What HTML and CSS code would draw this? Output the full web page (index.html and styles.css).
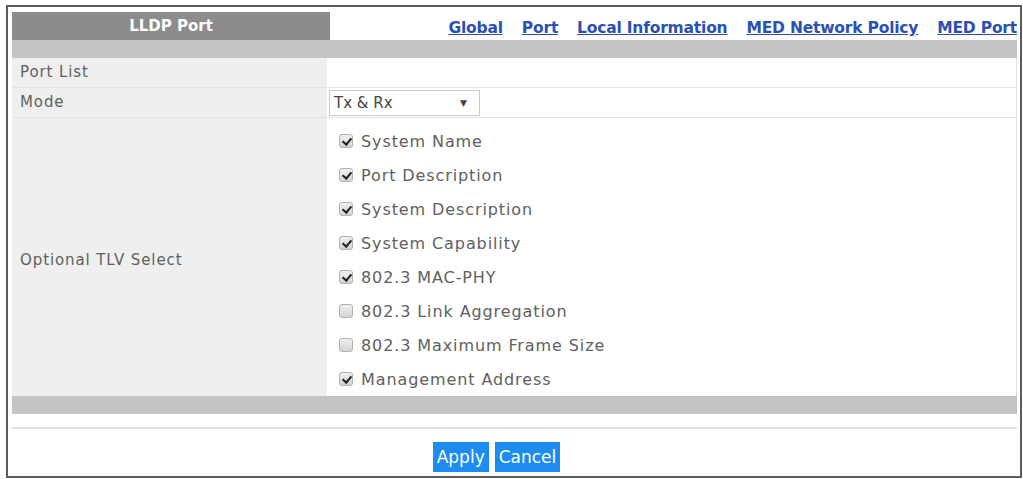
FILE: index.html
```html
<!DOCTYPE html>
<html lang="en">
<head>
  <meta charset="UTF-8">
  <title>LLDP Port</title>
  <link rel="stylesheet" href="styles.css">
</head>
<body>
  <!-- Figure frame -->
  <div class="frame">
    <div class="top-bar">
      <div class="tab">LLDP Port</div>
      <nav class="links">
        <a href="#">Global</a>
        <a href="#">Port</a>
        <a href="#">Local Information</a>
        <a href="#">MED Network Policy</a>
        <a href="#">MED Port</a>
      </nav>
    </div>
    <div class="bar"></div>

    <div class="form">
      <div class="label">Port List</div>
      <div class="value"></div>

      <div class="label">Mode</div>
      <div class="value">
        <div class="select"><span>Tx &amp; Rx</span><span class="arrow">▼</span></div>
      </div>

      <div class="label label-tall">Optional TLV Select</div>
      <div class="value checks">
        <label class="check on"><span class="box"></span>System Name</label>
        <label class="check on"><span class="box"></span>Port Description</label>
        <label class="check on"><span class="box"></span>System Description</label>
        <label class="check on"><span class="box"></span>System Capability</label>
        <label class="check on"><span class="box"></span>802.3 MAC-PHY</label>
        <label class="check"><span class="box"></span>802.3 Link Aggregation</label>
        <label class="check"><span class="box"></span>802.3 Maximum Frame Size</label>
        <label class="check on"><span class="box"></span>Management Address</label>
      </div>
    </div>

    <div class="bar"></div>
    <div class="rule"></div>

    <div class="actions">
      <button>Apply</button>
      <button>Cancel</button>
    </div>
  </div>
</body>
</html>
```

FILE: styles.css
```css
* {
  margin: 0;
  padding: 0;
  box-sizing: border-box;
}

body {
  background: #fff;
  font-family: 'DejaVu Sans', sans-serif;
  color: #606060;
}

/* Frame */
.frame {
  margin: 5px 0 0 6px;
  width: 1016px;
  height: 473px;
  border: 2px solid #5c5c5c;
  padding: 5px 3px 0 4px;
}

.top-bar {
  display: flex;
  align-items: flex-end;
  justify-content: space-between;
  height: 28px;
}

.tab {
  width: 318px;
  height: 28px;
  background: #8c8c8c;
  color: #fff;
  font-weight: bold;
  font-size: 15px;
  line-height: 28px;
  text-align: center;
}

.links {
  display: flex;
  gap: 19px;
  padding-bottom: 3px;
}

.links a {
  color: #2b50b3;
  font-weight: bold;
  font-size: 15.5px;
  letter-spacing: -0.2px;
}

.bar {
  height: 18px;
  background: #c4c4c4;
}

/* Form rows */
.form {
  display: grid;
  grid-template-columns: 315px 1fr;
}

.label {
  background: #efefef;
  font-size: 15px;
  letter-spacing: 0.9px;
  padding-left: 8px;
  height: 30px;
  line-height: 29px;
  border-bottom: 1px solid #e2e2e2;
}

.value {
  height: 30px;
  border-bottom: 1px solid #e2e2e2;
  border-right: 1px solid #e2e2e2;
  padding-left: 2px;
  display: flex;
  align-items: center;
}

.label-tall {
  height: auto;
  display: flex;
  align-items: center;
  padding-top: 6px;
  border-bottom: none;
}

.select {
  width: 151px;
  height: 26px;
  border: 1px solid #c9c9c9;
  display: flex;
  justify-content: space-between;
  align-items: center;
  padding: 0 12px 0 4px;
  font-size: 15px;
  color: #444;
}

.arrow {
  font-size: 9px;
}

.checks {
  height: auto;
  flex-direction: column;
  align-items: flex-start;
  padding: 6px 0 0 12px;
  border-bottom: none;
}

.check {
  display: flex;
  align-items: center;
  height: 34px;
  font-size: 16px;
  letter-spacing: 0.9px;
  color: #606060;
}

.box {
  width: 14px;
  height: 14px;
  border: 1px solid #b0b0b0;
  border-radius: 3px;
  background: linear-gradient(#f0f0f0, #d4d4d4);
  margin-right: 8px;
  position: relative;
}

.check.on .box::after {
  content: "";
  position: absolute;
  left: 4px;
  top: 1px;
  width: 4px;
  height: 7px;
  border: solid #222;
  border-width: 0 2px 2px 0;
  transform: rotate(40deg);
}

.rule {
  margin-top: 13px;
  height: 2px;
  background: #e0e0e0;
}

.actions {
  display: flex;
  justify-content: center;
  gap: 6px;
  padding: 13px 0 0 0;
  margin-left: -36px;
}

.actions button {
  background: #1c8cf0;
  color: #fff;
  border: none;
  height: 30px;
  padding: 0 4px;
  font-family: 'DejaVu Sans', sans-serif;
  font-size: 17px;
}
```
